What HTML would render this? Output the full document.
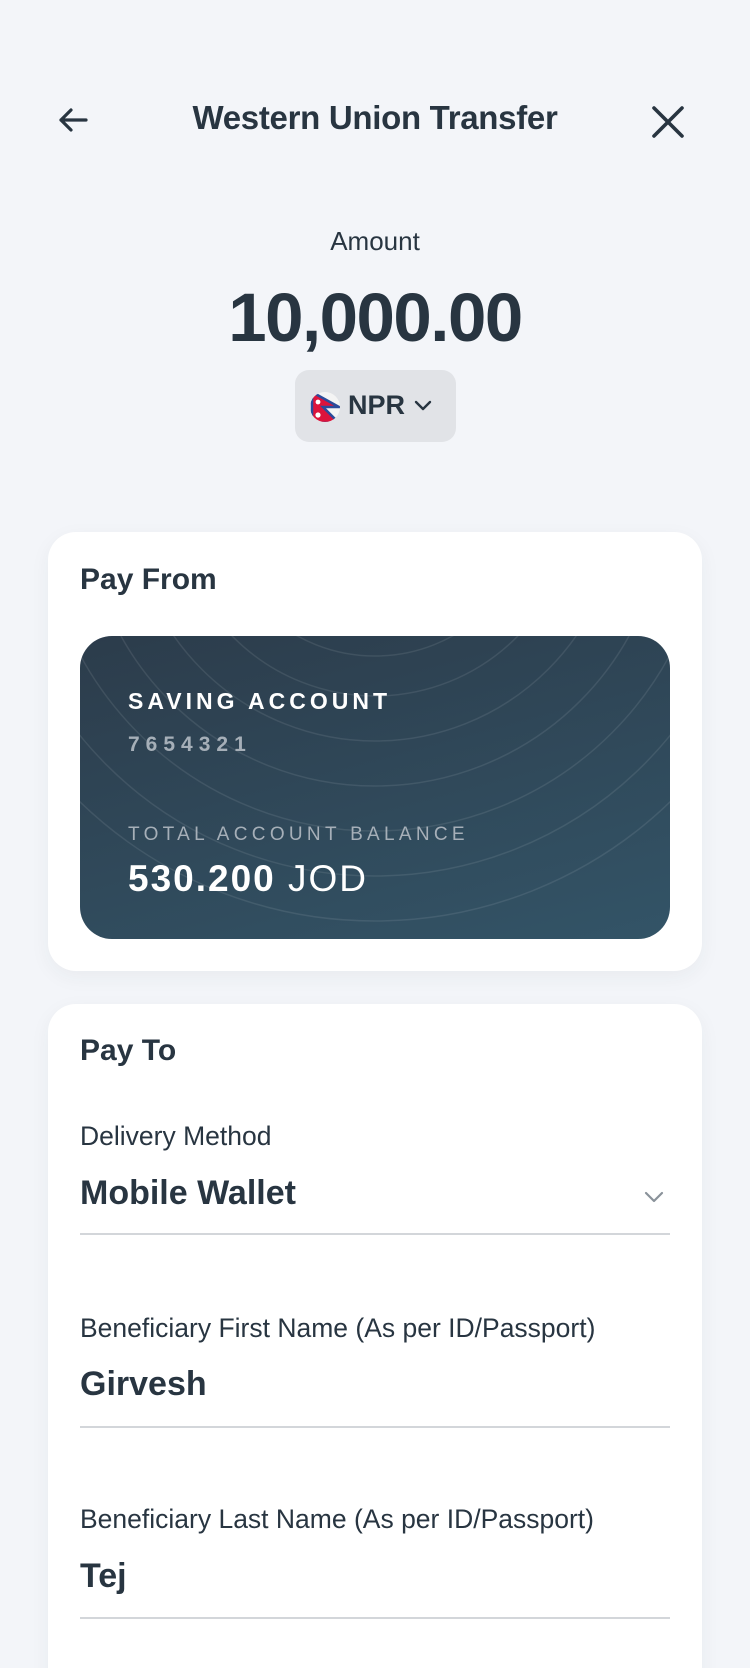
<!DOCTYPE html>
<html><head><meta charset="utf-8"><style>
*{margin:0;padding:0;box-sizing:border-box}
html,body{width:750px;height:1668px;overflow:hidden}
body{background:#f3f5f9;font-family:"Liberation Sans",sans-serif;color:#283541;position:relative}
.a{position:absolute;white-space:nowrap}
.card{position:absolute;left:48px;width:654px;background:#fff;border-radius:28px;box-shadow:0 6px 20px rgba(40,53,65,0.05)}
.lbl{font-size:26.5px;color:#283541}
.val{font-size:34px;font-weight:bold}
.line{position:absolute;left:80px;width:590px;height:2px;background:#d3d6da}
</style></head><body>
<svg class="a" style="left:56px;top:106px" width="34" height="28" viewBox="0 0 34 28"><path d="M30 14H5M15 4L5 14l10 10" fill="none" stroke="#283541" stroke-width="3.2" stroke-linecap="round" stroke-linejoin="round"/></svg>
<div class="a" style="left:0;width:750px;text-align:center;top:99px;font-size:33px;font-weight:bold;letter-spacing:-0.3px">Western Union Transfer</div>
<svg class="a" style="left:651px;top:105px" width="34" height="34" viewBox="0 0 34 34"><path d="M3 3L31 31M31 3L3 31" stroke="#283541" stroke-width="3.6" stroke-linecap="round"/></svg>
<div class="a" style="left:0;width:750px;text-align:center;top:226px;font-size:26px">Amount</div>
<div class="a" style="left:0;width:750px;text-align:center;top:278px;font-size:69px;font-weight:bold;letter-spacing:-1.5px">10,000.00</div>
<div class="a" style="left:295px;top:370px;width:161px;height:72px;background:#e1e3e7;border-radius:14px"></div>
<svg class="a" style="left:309px;top:391px" width="32" height="32" viewBox="0 0 32 32"><defs><clipPath id="c"><circle cx="16" cy="16" r="15"/></clipPath></defs><g clip-path="url(#c)"><rect width="32" height="32" fill="#f4f4f4"/><path d="M3 1L30 16H14l16 16H3z" fill="#dc143c" stroke="#2b4b9b" stroke-width="2.5"/><circle cx="9" cy="11" r="2.4" fill="#fff"/><circle cx="9" cy="24" r="2.6" fill="#fff"/></g></svg>
<div class="a" style="left:348px;top:390px;font-size:27px;font-weight:bold">NPR</div>
<svg class="a" style="left:413px;top:399px" width="20" height="14" viewBox="0 0 20 14"><path d="M3 3l7 7 7-7" fill="none" stroke="#283541" stroke-width="2.4" stroke-linecap="round" stroke-linejoin="round"/></svg>

<div class="card" style="top:532px;height:439px"></div>
<div class="a" style="left:80px;top:563px;font-size:30px;font-weight:bold">Pay From</div>
<div class="a" style="left:80px;top:636px;width:590px;height:303px;border-radius:32px;overflow:hidden;background:linear-gradient(165deg,#2c3c4b 0%,#335467 100%)">
<svg width="590" height="303" style="position:absolute;left:0;top:0"><g fill="none" stroke="rgba(255,255,255,0.09)" stroke-width="1.5">
<circle cx="295" cy="-140" r="160"/><circle cx="295" cy="-140" r="200"/><circle cx="295" cy="-140" r="245"/><circle cx="295" cy="-140" r="290"/><circle cx="295" cy="-140" r="335"/><circle cx="295" cy="-140" r="380"/><circle cx="295" cy="-140" r="425"/></g></svg>
<div class="a" style="left:48px;top:52px;color:#fff;font-size:23px;font-weight:bold;letter-spacing:4px">SAVING ACCOUNT</div>
<div class="a" style="left:48px;top:97px;color:#a6afb8;font-size:21px;font-weight:bold;letter-spacing:6px">7654321</div>
<div class="a" style="left:48px;top:188px;color:#a6afb8;font-size:19px;letter-spacing:4.3px">TOTAL ACCOUNT BALANCE</div>
<div class="a" style="left:48px;top:222px;color:#fff;font-size:37px;letter-spacing:2px"><b>530.200</b> JOD</div>
</div>

<div class="card" style="top:1004px;height:720px"></div>
<div class="a" style="left:80px;top:1034px;font-size:30px;font-weight:bold">Pay To</div>
<div class="a lbl" style="left:80px;top:1121px">Delivery Method</div>
<div class="a val" style="left:80px;top:1174px">Mobile Wallet</div>
<svg class="a" style="left:643px;top:1190px" width="22" height="14" viewBox="0 0 22 14"><path d="M3 3l8 8 8-8" fill="none" stroke="#8a929a" stroke-width="2.2" stroke-linecap="round" stroke-linejoin="round"/></svg>
<div class="line" style="top:1233px"></div>
<div class="a lbl" style="left:80px;top:1313px">Beneficiary First Name (As per ID/Passport)</div>
<div class="a val" style="left:80px;top:1365px">Girvesh</div>
<div class="line" style="top:1426px"></div>
<div class="a lbl" style="left:80px;top:1504px">Beneficiary Last Name (As per ID/Passport)</div>
<div class="a val" style="left:80px;top:1557px">Tej</div>
<div class="line" style="top:1617px"></div>
</body></html>
